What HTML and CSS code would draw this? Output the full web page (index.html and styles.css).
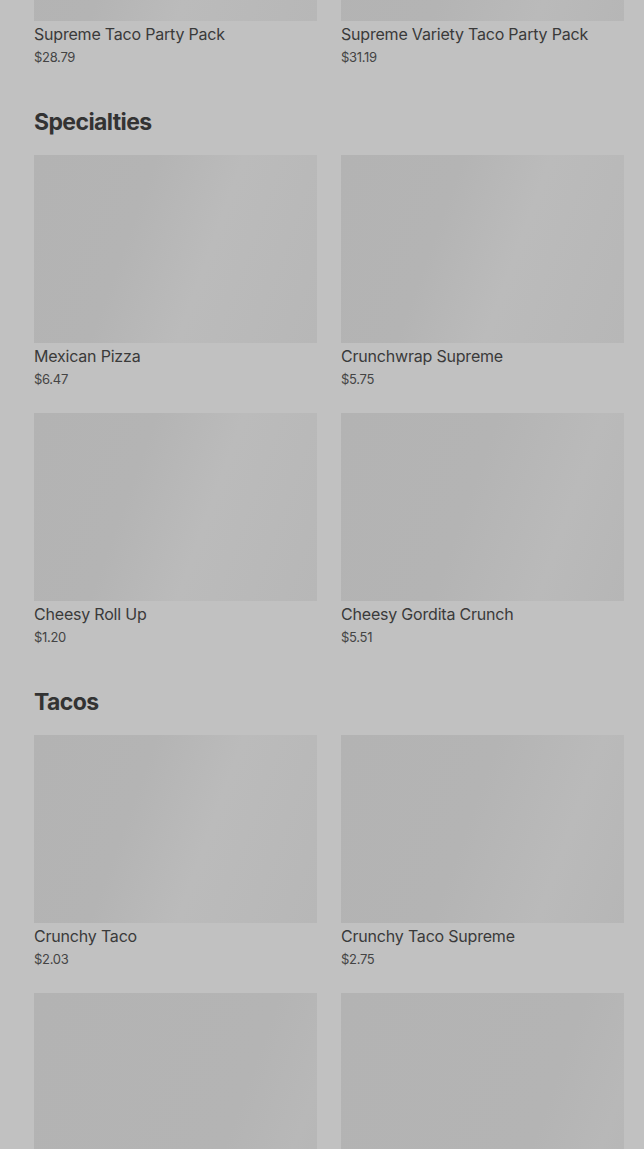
FILE: index.html
```html
<!DOCTYPE html>
<html lang="en">
<head>
    <meta charset="UTF-8">
    <meta name="viewport" content="width=device-width, initial-scale=1.0">
    <title>Menu</title>
    <link rel="stylesheet" href="styles.css">
</head>
<body>
    <main class="menu">
        <section class="category">
            <div class="grid">
                <div class="item">
                    <div class="thumb"></div>
                    <p class="name">Supreme Taco Party Pack</p>
                    <p class="price">$28.79</p>
                </div>
                <div class="item">
                    <div class="thumb shift"></div>
                    <p class="name">Supreme Variety Taco Party Pack</p>
                    <p class="price">$31.19</p>
                </div>
            </div>
        </section>

        <section class="category">
            <h2>Specialties</h2>
            <div class="grid">
                <div class="item">
                    <div class="thumb"></div>
                    <p class="name">Mexican Pizza</p>
                    <p class="price">$6.47</p>
                </div>
                <div class="item">
                    <div class="thumb"></div>
                    <p class="name">Crunchwrap Supreme</p>
                    <p class="price">$5.75</p>
                </div>
                <div class="item">
                    <div class="thumb"></div>
                    <p class="name">Cheesy Roll Up</p>
                    <p class="price">$1.20</p>
                </div>
                <div class="item">
                    <div class="thumb shift"></div>
                    <p class="name">Cheesy Gordita Crunch</p>
                    <p class="price">$5.51</p>
                </div>
            </div>
        </section>

        <section class="category">
            <h2>Tacos</h2>
            <div class="grid">
                <div class="item">
                    <div class="thumb"></div>
                    <p class="name">Crunchy Taco</p>
                    <p class="price">$2.03</p>
                </div>
                <div class="item">
                    <div class="thumb shift"></div>
                    <p class="name">Crunchy Taco Supreme</p>
                    <p class="price">$2.75</p>
                </div>
                <div class="item">
                    <div class="thumb late"></div>
                </div>
                <div class="item">
                    <div class="thumb late"></div>
                </div>
            </div>
        </section>
    </main>
</body>
</html>
```

FILE: styles.css
```css
body {
    margin: 0;
    padding: 0;
    background-color: #c1c1c1;
    color: #383838;
    font-family: Inter, Roboto, "Liberation Sans", sans-serif;
    overflow: hidden;
}
.menu {
    margin: -167px 20px 0 34px;
}
.category {
    margin-bottom: 39px;
}
.category h2 {
    margin: 0 0 17px;
    font-size: 23px;
    line-height: 32px;
    font-weight: 700;
    color: #333;
    letter-spacing: -0.6px;
}
.grid {
    display: grid;
    grid-template-columns: 1fr 1fr;
    column-gap: 24px;
    row-gap: 24px;
}
.thumb {
    height: 188px;
    background: linear-gradient(110deg, #b3b3b3 0%, #b4b4b4 35%, #bbbbbb 60%, #b7b7b7 100%);
}
.thumb.shift {
    background: linear-gradient(110deg, #b3b3b3 0%, #b4b4b4 45%, #bababa 75%, #b6b6b6 100%);
}
.thumb.late {
    background: linear-gradient(110deg, #b3b3b3 0%, #b4b4b4 70%, #b8b8b8 90%, #b6b6b6 100%);
}
.name {
    margin: 2px 0 0;
    font-size: 16px;
    line-height: 22px;
    font-weight: 400;
    color: #3a3a3a;
    letter-spacing: -0.2px;
}
.price {
    margin: 2px 0 0;
    font-size: 13px;
    line-height: 20px;
    color: #444;
    letter-spacing: -0.3px;
}
```
